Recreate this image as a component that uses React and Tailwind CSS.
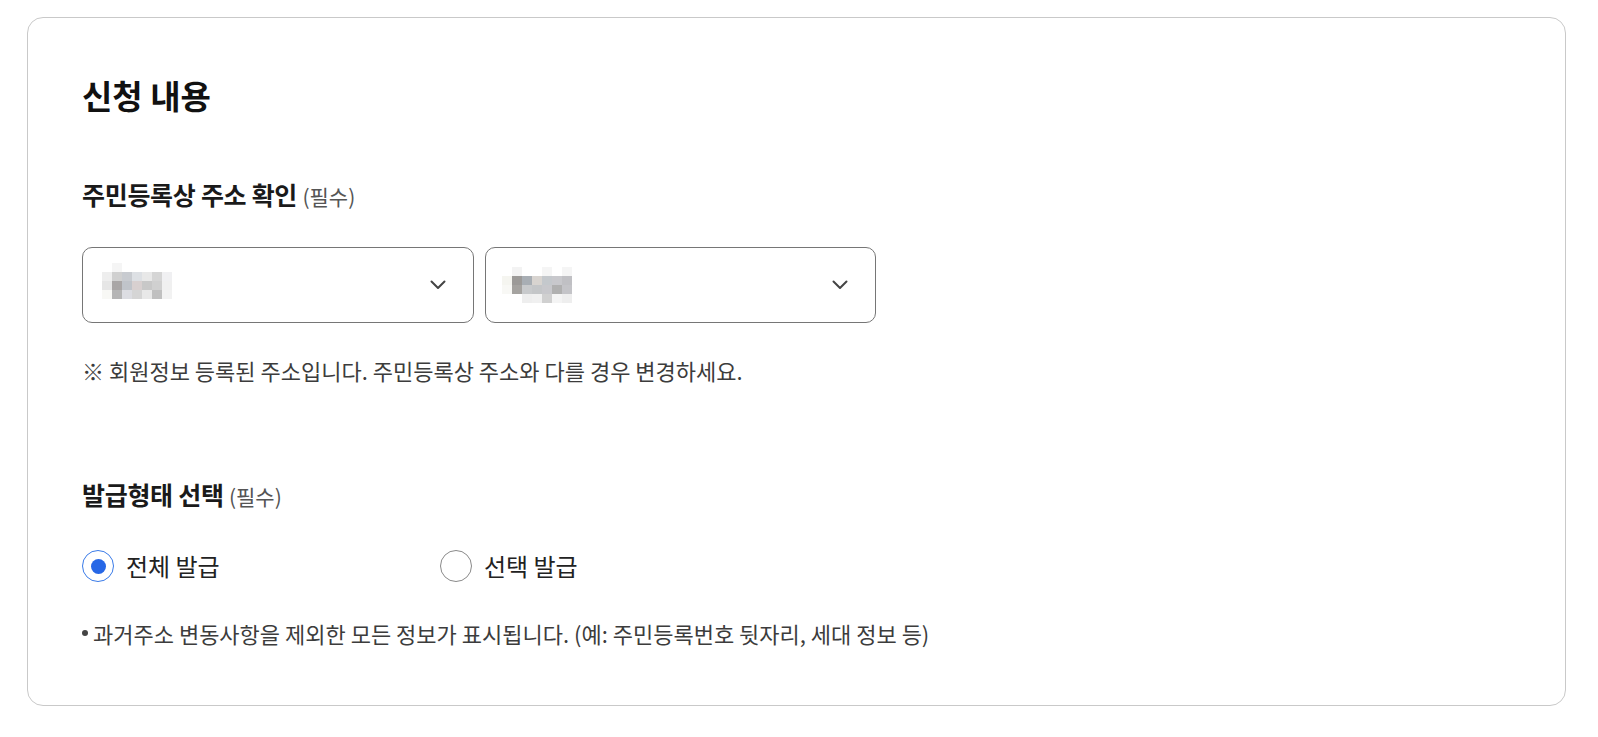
import React from 'react';

const FONT = { fontFamily: '"Noto Sans CJK KR", "Noto Sans", sans-serif' };

// pixelated (privacy) blur of the select values
const MOSAIC_A = [
  ['#ffffff', '#f5f5f5', '#ffffff', '#ffffff', '#ffffff', '#ffffff', '#ffffff'],
  ['#eeeeee', '#d0d0d0', '#c8cbd0', '#dde0e4', '#e8e8e8', '#d5d5d5', '#f0f0f2'],
  ['#e6e6e6', '#a9a6a6', '#c0c4ca', '#d8d0d0', '#c8c8c8', '#d0d0d0', '#f0f0f0'],
  ['#f8f8f5', '#b5b5b5', '#dcdde2', '#d5d5d5', '#e8e8e8', '#c0c0c0', '#f2f2f2'],
];

const MOSAIC_B = [
  ['#ffffff', '#f3f3f3', '#ffffff', '#ffffff', '#f5f5f5', '#ffffff', '#f5f5f5'],
  ['#f5f5f0', '#9c9a98', '#a8aeb4', '#d8d4d0', '#c4c8cc', '#c8c8cc', '#c0c0c4'],
  ['#f8f8f5', '#a5a3a0', '#c8cacc', '#c4c6c8', '#c8c8cc', '#b0b0b0', '#c4c4c8'],
  ['#ffffff', '#ffffff', '#eeeeee', '#f0f0f0', '#d0d0d0', '#f4f4f4', '#eeeeee'],
];

function Mosaic({ rows, className = '' }) {
  return (
    <svg width="70" height="36" viewBox="0 0 70 36" className={`shrink-0 ${className}`}>
      {rows.map((row, y) =>
        row.map((c, x) => <rect key={`${x}-${y}`} x={x * 10} y={y * 9} width="10" height="9" fill={c} />)
      )}
    </svg>
  );
}

function Chevron() {
  return (
    <svg width="16" height="10" viewBox="0 0 16 10" fill="none" className="shrink-0">
      <polyline points="1.5,1.5 8,8 14.5,1.5" stroke="#444444" strokeWidth="2" strokeLinecap="round" strokeLinejoin="round" />
    </svg>
  );
}

function FakeSelect({ rows, width, mosaicClass }) {
  return (
    <div className={`${width} h-[76px] rounded-[10px] border border-[#767676] bg-white flex items-center justify-between pl-[16px] pr-[27px]`}>
      <Mosaic rows={rows} className={mosaicClass} />
      <Chevron />
    </div>
  );
}

function Radio({ checked, label, className = '' }) {
  return (
    <label className={`flex items-center gap-[12px] ${className}`}>
      {checked ? (
        <span className="w-[32px] h-[32px] rounded-full border-[1.5px] border-[#3a7be8] flex items-center justify-center">
          <span className="w-[15px] h-[15px] rounded-full bg-[#2767e6]" />
        </span>
      ) : (
        <span className="w-[32px] h-[32px] rounded-full border border-[#8a8a8a]" />
      )}
      <span className="text-[24px] leading-[32px] text-[#222222]">{label}</span>
    </label>
  );
}

export default function App() {
  return (
    <div className="bg-white min-h-screen pl-[27px] pr-[32px] pt-[17px] pb-[31px]" style={FONT}>
      <div className="rounded-[16px] border border-[#c9c9c9] pl-[54px] pt-[57px] pb-[58px]">
        <h2 className="text-[33px] leading-[40px] font-bold text-[#111111]">신청 내용</h2>

        {/* 주소 확인 */}
        <h3 className="mt-[62px] text-[25px] leading-[34px] font-bold text-[#1a1a1a] tracking-[-0.3px]">
          주민등록상 주소 확인 <span className="text-[21px] font-normal text-[#555555] tracking-normal">(필수)</span>
        </h3>
        <div className="mt-[34px] flex gap-[11px]">
          <FakeSelect rows={MOSAIC_A} width="w-[392px]" mosaicClass="ml-[3px] mb-[8px]" />
          <FakeSelect rows={MOSAIC_B} width="w-[391px]" mosaicClass="" />
        </div>
        <p className="mt-[33px] text-[22px] leading-[28px] text-[#3c3c3c]">
          ※ 회원정보 등록된 주소입니다. 주민등록상 주소와 다를 경우 변경하세요.
        </p>

        {/* 발급형태 */}
        <h3 className="mt-[93px] text-[25px] leading-[34px] font-bold text-[#1a1a1a] tracking-[-0.3px]">
          발급형태 선택 <span className="text-[21px] font-normal text-[#555555] tracking-normal">(필수)</span>
        </h3>
        <div className="mt-[37px] flex">
          <Radio checked label="전체 발급" className="w-[358px]" />
          <Radio label="선택 발급" />
        </div>
        <p className="mt-[37px] flex items-center text-[22px] leading-[28px] text-[#3c3c3c]">
          <span className="w-[6px] h-[6px] rounded-full bg-[#444444] mr-[5px] shrink-0" />
          과거주소 변동사항을 제외한 모든 정보가 표시됩니다. (예: 주민등록번호 뒷자리, 세대 정보 등)
        </p>
      </div>
    </div>
  );
}
